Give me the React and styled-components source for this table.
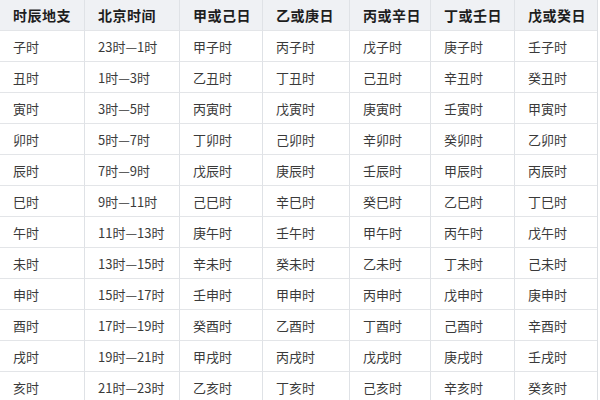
import React from 'react'
import styled, { createGlobalStyle } from 'styled-components'

const GlobalStyle = createGlobalStyle`
  html, body {
    margin: 0;
    padding: 0;
    background: #fff;
  }
  body {
    font-family: "Noto Sans CJK SC", "Liberation Sans", sans-serif;
  }
`

const stems = ['甲', '乙', '丙', '丁', '戊', '己', '庚', '辛', '壬', '癸']
const branches = ['子', '丑', '寅', '卯', '辰', '巳', '午', '未', '申', '酉', '戌', '亥']
const headers = ['时辰地支', '北京时间', '甲或己日', '乙或庚日', '丙或辛日', '丁或壬日', '戊或癸日']

const hourRange = i => {
  const start = i === 0 ? 23 : i * 2 - 1
  const end = i * 2 + 1
  return `${start}时—${end}时`
}

const rows = branches.map((b, i) => [
  `${b}时`,
  hourRange(i),
  ...[0, 1, 2, 3, 4].map(d => `${stems[(d * 12 + i) % 10]}${b}时`)
])

const Table = styled.div`
  display: grid;
  grid-template-columns: 85px 95px 83px 87px 81px 84px 82px;
  width: 597px;
  border-right: 1px solid #dcdfe3;
`

const Cell = styled.div`
  box-sizing: border-box;
  height: ${p => (p.$head ? '31px' : '31px')};
  display: flex;
  align-items: center;
  padding-left: 13px;
  border-right: ${p => (p.$last ? 'none' : '1px solid #dfe2e6')};
  border-bottom: 1px solid #e3e5e8;
  background: ${p => (p.$head ? '#eff1f4' : '#fff')};
  color: ${p => (p.$head ? '#1e1e1e' : '#3a3a3a')};
  font-size: ${p => (p.$head ? '14px' : '13px')};
  font-weight: ${p => (p.$head ? 700 : 400)};
  white-space: nowrap;
  letter-spacing: ${p => (p.$head ? '0.5px' : '0')};
`

export default function App() {
  return (
    <>
      <GlobalStyle />
      <Table>
        {headers.map((h, c) => (
          <Cell key={h} $head $last={c === headers.length - 1}>{h}</Cell>
        ))}
        {rows.map((r, ri) =>
          r.map((t, c) => (
            <Cell key={`${ri}-${c}`} $last={c === r.length - 1}>{t}</Cell>
          ))
        )}
      </Table>
    </>
  )
}
